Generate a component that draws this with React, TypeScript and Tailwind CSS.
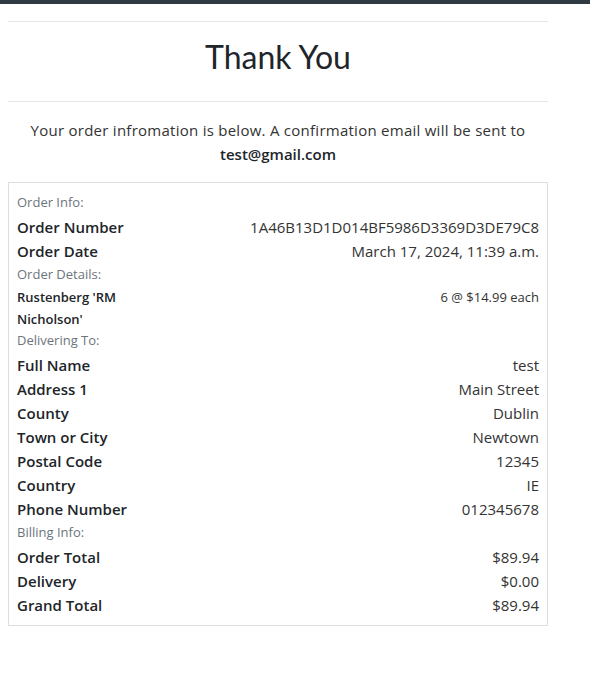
import React from 'react';

const body = { fontFamily: '"Open Sans", "Liberation Sans", sans-serif' };

type Row = { label: string; value: string };

function Section({ title }: { title: string }) {
  return <p className="flex h-6 items-center text-[13px] text-[#6c757d]">{title}</p>;
}

function Line({ label, value }: Row) {
  return (
    <div className="flex h-6 items-center justify-between text-[15px]">
      <span className="font-semibold text-[#212529]">{label}</span>
      <span className="text-[#333]">{value}</span>
    </div>
  );
}

const delivery: Row[] = [
  { label: 'Full Name', value: 'test' },
  { label: 'Address 1', value: 'Main Street' },
  { label: 'County', value: 'Dublin' },
  { label: 'Town or City', value: 'Newtown' },
  { label: 'Postal Code', value: '12345' },
  { label: 'Country', value: 'IE' },
  { label: 'Phone Number', value: '012345678' },
];

const billing: Row[] = [
  { label: 'Order Total', value: '$89.94' },
  { label: 'Delivery', value: '$0.00' },
  { label: 'Grand Total', value: '$89.94' },
];

export default function App() {
  return (
    <div className="min-h-[678px] bg-white" style={body}>
      <div className="h-1 bg-[#2f3a42]" />
      <div className="ml-2 w-[540px]">
        <hr className="mt-[17px] border-t border-[#e5e5e5]" />
        <h1
          className="pt-[14px] pb-[24px] text-center text-[32px] leading-[41px] text-[#212529]"
          style={{ fontFamily: 'Lato, sans-serif' }}
        >
          Thank You
        </h1>
        <hr className="border-t border-[#e5e5e5]" />
        <p className="mt-[16px] text-center text-[15px] leading-6 tracking-[0.26px] text-[#333]">
          Your order infromation is below. A confirmation email will be sent to
          <br />
          <span className="font-semibold tracking-normal text-[#212529]">test@gmail.com</span>
        </p>
        <div className="mt-[16px] border border-[#dedede] px-2 pt-2 pb-[8px]">
          <Section title="Order Info:" />
          <Line label="Order Number" value="1A46B13D1D014BF5986D3369D3DE79C8" />
          <Line label="Order Date" value="March 17, 2024, 11:39 a.m." />
          <Section title="Order Details:" />
          <div className="-my-px flex justify-between text-[13px] leading-[22px]">
            <span className="w-[120px] font-semibold text-[#212529]">Rustenberg 'RM Nicholson'</span>
            <span className="text-[#333]">6 @ $14.99 each</span>
          </div>
          <Section title="Delivering To:" />
          {delivery.map((r) => (
            <Line key={r.label} {...r} />
          ))}
          <Section title="Billing Info:" />
          {billing.map((r) => (
            <Line key={r.label} {...r} />
          ))}
        </div>
      </div>
    </div>
  );
}
